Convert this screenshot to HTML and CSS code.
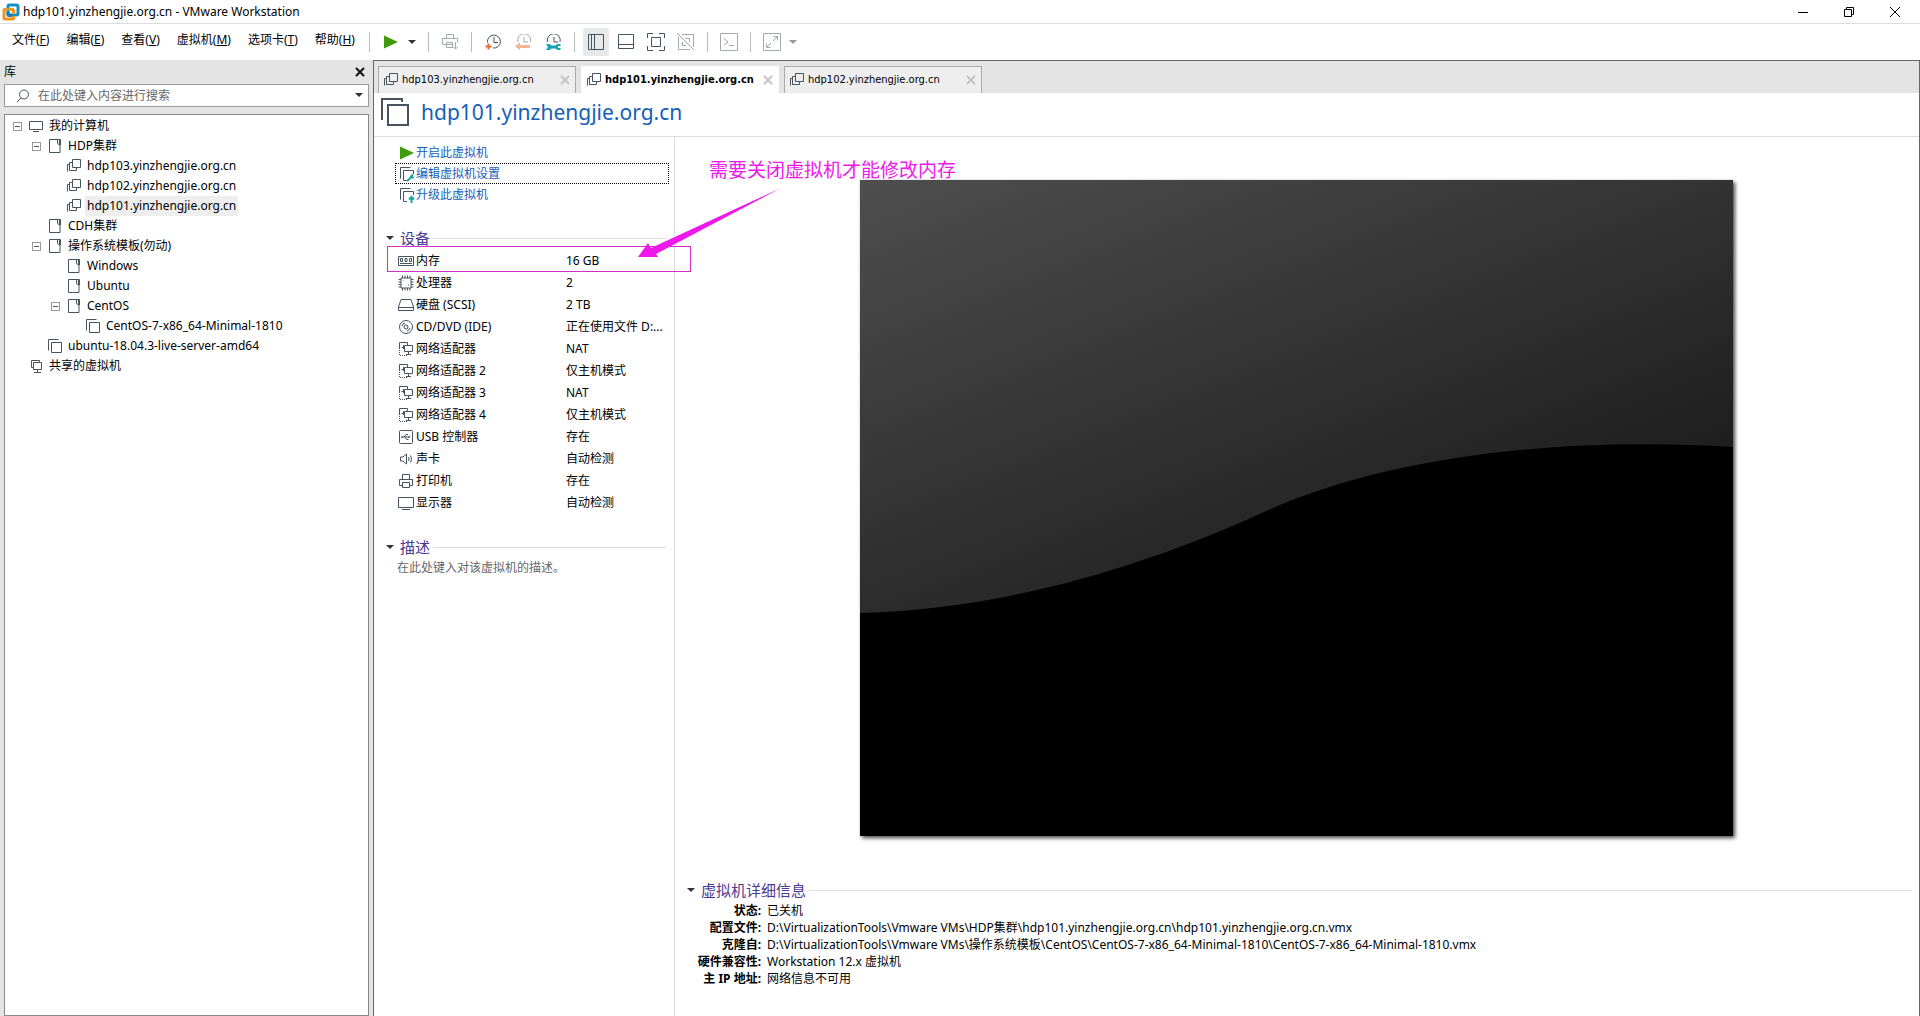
FILE: index.html
```html
<!DOCTYPE html>
<html lang="zh-CN">
<head>
<meta charset="utf-8">
<title>hdp101.yinzhengjie.org.cn - VMware Workstation</title>
<link rel="stylesheet" href="styles.css">
</head>
<body>
<svg class="sprite" aria-hidden="true">
  <symbol id="monitor" viewBox="0 0 16 16"><path d="M1.5 3.5h13v8h-13zM5 13.500h6" /></symbol>
  <symbol id="folder" viewBox="0 0 16 16"><path d="M10.500 1.500h-8v13h10.500V7M9.500 1.500h4v5.500M10.500 1.500v4l2 1.500v-5"/></symbol>
  <symbol id="vm-clone" viewBox="0 0 16 16"><path d="M6.500 1.500h8v8h-8zM6.500 4.500h-3v8h7v-3M3.500 6.500h-2v7"/></symbol>
  <symbol id="vm" viewBox="0 0 16 16"><path d="M4.500 4.500h10v10h-10zM1.500 12.500v-11h10"/></symbol>
  <symbol id="shared" viewBox="0 0 16 16"><path d="M5.500 4.500h8v7h-8zM5.500 9.500h-2v-7h8v2M9.500 11.500v3M6 14.500h7"/></symbol>
  <symbol id="play" viewBox="0 0 16 16"><path class="solid-green" d="M1 1.500 15 8 1 14.500z"/></symbol>
  <symbol id="caret" viewBox="0 0 8 5"><path class="solid" d="M0 0h8L4 4z"/></symbol>
  <symbol id="cross" viewBox="0 0 10 10"><path d="M1 1l8 8M9 1 1 9"/></symbol>
  <symbol id="nic" viewBox="0 0 16 16"><path d="M1.500 8V1.500h8V4M6.500 4.500h8v6h-8zM10.500 10.500v3M8 13.500h5M3.500 6.500h3M5.500 4v4"/><path stroke-dasharray="1 1" d="M1.500 9v5.500H9"/></symbol>
</svg>

<header class="titlebar">
  <svg class="logo" viewBox="0 0 18 18" aria-hidden="true">
    <rect x="6" y="2" width="10" height="10" rx="1.500" stroke="#1790c8"/>
    <path d="M6.500 6.500H3q-1 0-1 1V15q0 1 1 1h7.500q1 0 1-1v-2" stroke="#f0941e"/>
    <path d="M6 8.500v3q0 1 1 1h3" stroke="#147db4"/>
    <path d="M8 6.500h2.500q1 0 1 1v3" stroke="#f0941e"/>
  </svg>
  <h1 class="window-title">hdp101.yinzhengjie.org.cn - VMware Workstation</h1>
  <div class="window-buttons">
    <button type="button" aria-label="最小化"><svg viewBox="0 0 10 10"><path d="M0 5.500h10"/></svg></button>
    <button type="button" aria-label="还原"><svg viewBox="0 0 10 10"><path d="M.5 2.500h7v7h-7zM2.500 2.500v-2h7v7h-2"/></svg></button>
    <button type="button" aria-label="关闭"><svg viewBox="0 0 10 10"><path d="M0 0l10 10M10 0 0 10"/></svg></button>
  </div>
</header>

<div class="command-bar">
  <nav class="menu">
    <button type="button">文件(<u>F</u>)</button>
    <button type="button">编辑(<u>E</u>)</button>
    <button type="button">查看(<u>V</u>)</button>
    <button type="button">虚拟机(<u>M</u>)</button>
    <button type="button">选项卡(<u>T</u>)</button>
    <button type="button">帮助(<u>H</u>)</button>
  </nav>
  <div class="toolbar">
    <span class="separator"></span>
    <button type="button" aria-label="开启"><svg class="icon"><use href="#play"/></svg></button>
    <button type="button" class="drop" aria-label="电源选项"><svg class="caret"><use href="#caret"/></svg></button>
    <span class="separator"></span>
    <button type="button" class="disabled" aria-label="发送按键"><svg class="icon" viewBox="0 0 16 16"><path d="M4.500 4.500v-4h7v4M.5 10.500v-6h15v4M.5 10.500H10M4.500 8.500h6v5h-6zM13.500 8v7M11 12.500l2.500 2.500 2.500-2.500"/></svg></button>
    <span class="separator"></span>
    <button type="button" aria-label="拍摄快照"><svg class="icon" viewBox="0 0 16 16"><path d="M2.500 8.500a6.500 6.500 0 1 1 5.500 5.500M9 3v5.500h4"/><path class="orange" d="M3.500 9.500v6M.5 12.500h6"/></svg></button>
    <button type="button" class="disabled" aria-label="恢复快照"><svg class="icon" viewBox="0 0 16 16"><path d="M3 8a6.500 6.500 0 1 1 12.500 0M9 3v5h4"/><path class="solid-orange" d="M0 12.500l5-4V11h10v3H5v2z"/></svg></button>
    <button type="button" aria-label="管理快照"><svg class="icon" viewBox="0 0 16 16"><path d="M2.500 8a6.500 6.500 0 1 1 12.500 0M9 3v5h4"/><path class="solid-teal" d="M1 10h3a3 3 0 0 1 2.500 1.500h4A3 3 0 0 1 13 10h2l1 2h-3v2h3l-1 2h-2a3 3 0 0 1-2.500-1.500h-4A3 3 0 0 1 4 16H1l2-3z"/></svg></button>
    <span class="separator"></span>
    <button type="button" class="active" aria-label="显示库"><svg class="icon" viewBox="0 0 16 16"><path d="M.5.5h15v15H.5zM3.500.5v15M6.500.5v15"/></svg></button>
    <button type="button" aria-label="缩略图栏"><svg class="icon" viewBox="0 0 16 16"><path d="M.5.5h15v14H.5zM.5 10.500h15"/></svg></button>
    <button type="button" aria-label="全屏"><svg class="icon large" viewBox="0 0 18 18"><path d="M.5 5V.5H6M12 .5h5.500V5M17.500 13v4.500H12M6 17.500H.5V13M4.500 4.500h9v9h-9z"/></svg></button>
    <button type="button" class="disabled" aria-label="Unity"><svg class="icon large" viewBox="0 0 18 18"><path d="M5 1.500h11.500V14M13 16.500H1.500V4M5.500 9v3.500H9M8 5.500h4.500V9M0 0l17 17"/></svg></button>
    <span class="separator"></span>
    <button type="button" class="disabled" aria-label="控制台"><svg class="icon large" viewBox="0 0 18 18"><path d="M.5.5h17v17H.5zM4 5.500l4 3.500-4 3M9 12.500h5"/></svg></button>
    <span class="separator"></span>
    <button type="button" class="disabled" aria-label="拉伸"><svg class="icon large" viewBox="0 0 18 18"><path d="M.5.5h17v17H.5zM10 8l4-4M10.500 3.500h4v4M8 10l-4 4M3.500 10.500v4h4"/></svg></button>
    <button type="button" class="drop disabled" aria-label="拉伸选项"><svg class="caret"><use href="#caret"/></svg></button>
  </div>
</div>

<div class="window-body">
  <aside class="library">
    <div class="library-head">
      <h2>库</h2>
      <button type="button" aria-label="关闭库"><svg viewBox="0 0 10 10"><use href="#cross"/></svg></button>
    </div>
    <div class="search">
      <svg class="magnifier" viewBox="0 0 14 14"><path d="M1 13l4-4"/><circle cx="8" cy="5.500" r="4.500"/></svg>
      <input type="text" aria-label="搜索" placeholder="在此处键入内容进行搜索">
      <button type="button" aria-label="搜索选项"><svg class="caret"><use href="#caret"/></svg></button>
    </div>
    <ul class="tree">
      <li>
        <div class="node"><button type="button" class="expander" aria-label="折叠"></button><svg class="icon"><use href="#monitor"/></svg><span>我的计算机</span></div>
        <ul>
          <li>
            <div class="node"><button type="button" class="expander" aria-label="折叠"></button><svg class="icon"><use href="#folder"/></svg><span>HDP集群</span></div>
            <ul>
              <li class="node leaf"><svg class="icon"><use href="#vm-clone"/></svg><span>hdp103.yinzhengjie.org.cn</span></li>
              <li class="node leaf"><svg class="icon"><use href="#vm-clone"/></svg><span>hdp102.yinzhengjie.org.cn</span></li>
              <li class="node leaf selected"><svg class="icon"><use href="#vm-clone"/></svg><span>hdp101.yinzhengjie.org.cn</span></li>
            </ul>
          </li>
          <li class="node leaf"><svg class="icon"><use href="#folder"/></svg><span>CDH集群</span></li>
          <li>
            <div class="node"><button type="button" class="expander" aria-label="折叠"></button><svg class="icon"><use href="#folder"/></svg><span>操作系统模板(勿动)</span></div>
            <ul>
              <li class="node leaf"><svg class="icon"><use href="#folder"/></svg><span>Windows</span></li>
              <li class="node leaf"><svg class="icon"><use href="#folder"/></svg><span>Ubuntu</span></li>
              <li>
                <div class="node"><button type="button" class="expander" aria-label="折叠"></button><svg class="icon"><use href="#folder"/></svg><span>CentOS</span></div>
                <ul>
                  <li class="node leaf"><svg class="icon"><use href="#vm"/></svg><span>CentOS-7-x86_64-Minimal-1810</span></li>
                </ul>
              </li>
            </ul>
          </li>
          <li class="node leaf"><svg class="icon"><use href="#vm"/></svg><span>ubuntu-18.04.3-live-server-amd64</span></li>
        </ul>
      </li>
      <li class="node leaf"><svg class="icon"><use href="#shared"/></svg><span>共享的虚拟机</span></li>
    </ul>
  </aside>

  <main class="workspace">
    <div class="tabs">
      <div class="tab"><svg class="icon"><use href="#vm-clone"/></svg><a href="#hdp103">hdp103.yinzhengjie.org.cn</a><button type="button" aria-label="关闭标签"><svg viewBox="0 0 10 10"><use href="#cross"/></svg></button></div>
      <div class="tab current"><svg class="icon"><use href="#vm-clone"/></svg><a href="#hdp101">hdp101.yinzhengjie.org.cn</a><button type="button" aria-label="关闭标签"><svg viewBox="0 0 10 10"><use href="#cross"/></svg></button></div>
      <div class="tab"><svg class="icon"><use href="#vm-clone"/></svg><a href="#hdp102">hdp102.yinzhengjie.org.cn</a><button type="button" aria-label="关闭标签"><svg viewBox="0 0 10 10"><use href="#cross"/></svg></button></div>
    </div>

    <div class="vm-head">
      <svg viewBox="0 0 28 28" aria-hidden="true"><path d="M7 7h20v20H7zM1 22V1h20v3"/></svg>
      <h2>hdp101.yinzhengjie.org.cn</h2>
    </div>

    <div class="vm-page">
      <section class="summary">
        <ul class="actions">
          <li><a href="#power-on"><svg class="icon"><use href="#play"/></svg>开启此虚拟机</a></li>
          <li class="focused"><a href="#settings"><svg class="icon" viewBox="0 0 16 16"><path d="M8 14.500H4.500v-10h10V8M1.500 12.500v-11h10"/><path class="teal" d="M8 15l5-4.500M14 8.500l-2 2 1 1h2"/></svg>编辑虚拟机设置</a></li>
          <li><a href="#upgrade"><svg class="icon" viewBox="0 0 16 16"><path d="M8 14.500H4.500v-10h10V8M1.500 12.500v-11h10"/><path class="teal" d="M12.500 16v-6M10 12.500 12.500 10l2.500 2.500"/></svg>升级此虚拟机</a></li>
        </ul>

        <h3 class="section-title"><svg class="caret"><use href="#caret"/></svg>设备</h3>
        <table class="devices">
          <tr><th scope="row"><svg class="icon" viewBox="0 0 16 16"><path d="M.5 3.500h15v9H.5zM2.500 5.500v3h2v-3zM7 5.500v3h2v-3zM11.500 5.500v3h2v-3zM2 10.500h12"/></svg>内存</th><td>16 GB</td></tr>
          <tr><th scope="row"><svg class="icon" viewBox="0 0 16 16"><path d="M3 3h10v10H3zM4.500.5V3M7 .5V3M9.500.5V3M12 .5V3M4.500 13v2.500M7 13v2.500M9.500 13v2.500M12 13v2.500M.5 4.500H3M.5 7H3M.5 9.500H3M.5 12H3M13 4.500h2.500M13 7h2.500M13 9.500h2.500M13 12h2.500M5.500 6v-.5M10.500 10.500v-1"/></svg>处理器</th><td>2</td></tr>
          <tr><th scope="row"><svg class="icon" viewBox="0 0 16 16"><path d="M3 2.500h10l2.500 7.500v3.500H.5V10zM.5 10.500h15"/></svg>硬盘 (SCSI)</th><td>2 TB</td></tr>
          <tr><th scope="row"><svg class="icon" viewBox="0 0 16 16"><circle cx="8" cy="8" r="6.500"/><circle cx="8" cy="8" r="2"/><path d="M4 7a4 4 0 0 1 3-3M12 9a4 4 0 0 1-3 3"/></svg>CD/DVD (IDE)</th><td>正在使用文件 D:...</td></tr>
          <tr><th scope="row"><svg class="icon"><use href="#nic"/></svg>网络适配器</th><td>NAT</td></tr>
          <tr><th scope="row"><svg class="icon"><use href="#nic"/></svg>网络适配器 2</th><td>仅主机模式</td></tr>
          <tr><th scope="row"><svg class="icon"><use href="#nic"/></svg>网络适配器 3</th><td>NAT</td></tr>
          <tr><th scope="row"><svg class="icon"><use href="#nic"/></svg>网络适配器 4</th><td>仅主机模式</td></tr>
          <tr><th scope="row"><svg class="icon" viewBox="0 0 16 16"><rect x="1.500" y="1.500" width="13" height="13" rx="1"/><path d="M3.500 8H12M6 8l2-2.500h2M7 8l1.500 2.500h2M11 7v2M3 8h2" /></svg>USB 控制器</th><td>存在</td></tr>
          <tr><th scope="row"><svg class="icon" viewBox="0 0 16 16"><path d="M2.500 6H5l3.500-3v10L5 10H2.500zM10.500 6q1 2 0 4M12.500 4.500q2 3.500 0 7"/></svg>声卡</th><td>自动检测</td></tr>
          <tr><th scope="row"><svg class="icon" viewBox="0 0 16 16"><path d="M4.500 6V1.500h7V6M4.500 12.500h-3v-6h13v6h-3M4.500 9.500h7v5h-7z"/></svg>打印机</th><td>存在</td></tr>
          <tr><th scope="row"><svg class="icon" viewBox="0 0 16 16"><path d="M.5 2.500h15v10H.5zM4 14.500h8"/></svg>显示器</th><td>自动检测</td></tr>
        </table>

        <h3 class="section-title"><svg class="caret"><use href="#caret"/></svg>描述</h3>
        <p class="description">在此处键入对该虚拟机的描述。</p>
      </section>

      <section class="console">
        <svg class="screen" viewBox="0 0 873 656" preserveAspectRatio="none" role="img" aria-label="虚拟机屏幕">
          <defs><linearGradient id="sky" gradientUnits="userSpaceOnUse" x1="0" y1="0" x2="234" y2="586"><stop offset="0" stop-color="#4e4e4e"/><stop offset="1" stop-color="#191919"/></linearGradient></defs>
          <rect width="873" height="656" fill="url(#sky)"/>
          <path d="M0 433C150 429 290 384 404 332C520 279 690 256 873 267V656H0z" fill="#000"/>
        </svg>

        <h3 class="section-title"><svg class="caret"><use href="#caret"/></svg>虚拟机详细信息</h3>
        <dl class="details">
          <dt>状态:</dt><dd>已关机</dd>
          <dt>配置文件:</dt><dd>D:\VirtualizationTools\Vmware VMs\HDP集群\hdp101.yinzhengjie.org.cn\hdp101.yinzhengjie.org.cn.vmx</dd>
          <dt>克隆自:</dt><dd>D:\VirtualizationTools\Vmware VMs\操作系统模板\CentOS\CentOS-7-x86_64-Minimal-1810\CentOS-7-x86_64-Minimal-1810.vmx</dd>
          <dt>硬件兼容性:</dt><dd>Workstation 12.x 虚拟机</dd>
          <dt>主 IP 地址:</dt><dd>网络信息不可用</dd>
        </dl>
      </section>

      <div class="memory-frame"></div>
      <svg class="arrow" viewBox="0 0 144 72" aria-hidden="true"><path d="M0 69 10 55 13 60 143 0 18 66 20 69z"/></svg>
      <p class="note">需要关闭虚拟机才能修改内存</p>
    </div>
  </main>
</div>
</body>
</html>
```
FILE: styles.css
```css
:root {
  --slate: #46545f;
  --link: #1560b8;
  --violet: #4a3a94;
  --magenta: #ee18ea;
  --chrome: #e4e4e4;
  --rule: #dcdcdc;
  --edge: #666;
}

* { box-sizing: border-box; }

body {
  display: flex;
  flex-direction: column;
  min-height: 100vh;
  margin: 0;
  background: #fff;
  color: #000;
  font: 12px/16px "Noto Sans", "Noto Sans CJK SC", sans-serif;
}

h1, h2, h3, p, ul, dl, dd { margin: 0; padding: 0; font-weight: 400; }
ul { list-style: none; }
a { color: inherit; text-decoration: none; }
button { margin: 0; padding: 0; border: 0; background: none; color: inherit; font: inherit; }
svg { display: block; flex: none; fill: none; stroke: var(--slate); stroke-width: 1; }

.sprite { position: absolute; width: 0; height: 0; }
.icon { width: 16px; height: 16px; }
.icon.large { width: 18px; height: 18px; }
.caret { width: 8px; height: 5px; }
.solid { fill: #333; stroke: none; }
.solid-green { fill: #3f9a0c; stroke: none; }
.solid-orange { fill: #f06a38; stroke: none; }
.solid-teal { fill: #14a3b8; stroke: none; }
.orange { stroke: #ee6a35; stroke-width: 2; }
.teal { stroke: #18a8a8; stroke-width: 2; }

/* Title bar */
.titlebar {
  display: flex;
  align-items: center;
  height: 24px;
  padding: 0 2px;
  border-bottom: 1px solid var(--rule);
}
.logo { width: 18px; height: 18px; stroke-width: 3; }
.window-title { flex: 1; padding-left: 3px; font-size: 12px; line-height: 16px; }
.window-buttons { display: flex; }
.window-buttons button { display: grid; place-items: center; width: 46px; height: 20px; }
.window-buttons svg { width: 10px; height: 10px; stroke: #000; }

/* Menu and toolbar */
.command-bar { display: flex; height: 36px; }
.menu { display: flex; align-items: center; gap: 17px; width: 369px; padding: 0 0 4px 12px; white-space: nowrap; }
.toolbar { display: flex; align-items: center; }
.toolbar button { display: grid; place-items: center; width: 30px; height: 28px; }
.toolbar .drop { justify-items: start; width: 16px; padding-left: 2px; }
.toolbar .active { border: 2px solid #fff; border-width: 0 2px; border-radius: 4px; background: #e6e9ea; }
.toolbar .disabled { opacity: .5; }
.separator { width: 1px; height: 20px; margin: 0 6px; background: #bbb; }
.toolbar .separator:first-child { margin-left: 0; }

.window-body { display: flex; flex: 1; }

/* Library */
.library { display: flex; flex-direction: column; width: 373px; padding: 0 4px; background: var(--chrome); }
.library-head { display: flex; align-items: center; justify-content: space-between; height: 24px; padding-right: 4px; }
.library-head h2 { font-size: 12px; line-height: 16px; }
.library-head button { width: 10px; height: 10px; }
.library-head svg { width: 10px; height: 10px; stroke: #111; stroke-width: 2; }
.search { display: flex; align-items: center; height: 23px; margin-bottom: 7px; border: 1px solid #999; background: #fff; }
.magnifier { width: 14px; height: 14px; margin: 0 8px 0 11px; }
.search input { flex: 1; min-width: 0; padding: 0; border: 0; outline: 0; background: none; font: inherit; }
.search input::placeholder { color: #666; }
.search button { display: grid; place-items: center; width: 18px; height: 20px; }
.tree { flex: 1; padding: 1px 0 0 8px; border: 1px solid #888; background: #fff; }
.tree ul { padding-left: 19px; }
.node { display: flex; align-items: center; height: 20px; }
.node .icon { margin: 0 3px 0 6px; }
.leaf .icon { margin-left: 15px; }
.node span { padding: 0 2px; line-height: 20px; white-space: nowrap; }
.selected span { background: #eee; }
.expander { width: 9px; height: 9px; border: 1px solid #999; background: linear-gradient(#557, #557) center / 5px 1px no-repeat; }

/* Workspace */
.workspace { display: flex; flex: 1; flex-direction: column; min-width: 0; border: 1px solid var(--edge); border-bottom: 0; }
.tabs { display: flex; gap: 5px; height: 32px; padding: 5px 4px 0; background: var(--chrome); }
.tab {
  display: flex;
  align-items: center;
  width: 198px;
  padding: 0 5px 0 4px;
  border: 1px solid #aaa;
  border-bottom: 0;
  background: #eee;
  font: 11px/16px "DejaVu Sans Condensed", "DejaVu Sans", sans-serif;
}
.tab a { flex: 1; padding-left: 3px; white-space: nowrap; }
.tab button, .tab button svg { width: 10px; height: 10px; }
.tab button svg { stroke: #c4c4c4; stroke-width: 2; }
.tab.current { border-color: #fff; background: #fff; font-weight: 700; }

.vm-head { display: flex; align-items: center; gap: 12px; height: 44px; padding: 0 7px 5px; border-bottom: 1px solid var(--rule); }
.vm-head svg { width: 28px; height: 28px; stroke-width: 2; }
.vm-head h2 { color: var(--link); font-size: 21px; line-height: 28px; }

.vm-page { position: relative; display: flex; flex: 1; }
.summary { width: 301px; padding: 5px 5px 0 12px; border-right: 1px solid var(--rule); }
.actions { padding-left: 9px; }
.actions li { height: 21px; border: 1px dotted transparent; }
.actions a { display: flex; align-items: center; gap: 1px; height: 19px; padding-left: 3px; color: var(--link); }
.actions .focused { border-color: #000; }

.section-title { display: flex; align-items: center; height: 20px; color: var(--violet); font-size: 15px; line-height: 20px; white-space: nowrap; }
.section-title .caret { margin-right: 6px; }
.section-title::after { content: ""; flex: 1; height: 1px; margin-left: 3px; background: var(--rule); }

.summary .section-title { margin: 23px 3px 2px 0; }
.devices { width: 100%; border-collapse: collapse; table-layout: fixed; }
.devices tr { height: 22px; }
.devices th, .devices td { padding: 0; text-align: left; font-weight: 400; white-space: nowrap; }
.devices th { width: 180px; padding-left: 12px; }
.devices .icon { display: inline-block; margin-right: 2px; vertical-align: middle; }
.description { padding: 1px 0 0 11px; color: #666; }

.console { flex: 1; min-width: 0; padding: 43px 7px 0 12px; }
.screen { width: calc(100% - 352px); aspect-ratio: 873 / 656; margin: 0 179px 44px 173px; stroke: none; box-shadow: 2px 2px 4px #444; }
.details { display: grid; grid-template-columns: 74px 1fr; column-gap: 6px; padding-top: 2px; line-height: 17px; }
.details dt { text-align: right; font-weight: 700; white-space: nowrap; }

/* Annotations over the page */
.memory-frame { position: absolute; top: 109px; left: 13px; width: 304px; height: 26px; border: 1px solid #cf2fc4; }
.arrow { position: absolute; top: 51px; left: 264px; width: 144px; height: 72px; fill: var(--magenta); stroke: none; }
.note { position: absolute; top: 20px; left: 335px; color: var(--magenta); font-size: 19px; line-height: 26px; white-space: nowrap; }
```
